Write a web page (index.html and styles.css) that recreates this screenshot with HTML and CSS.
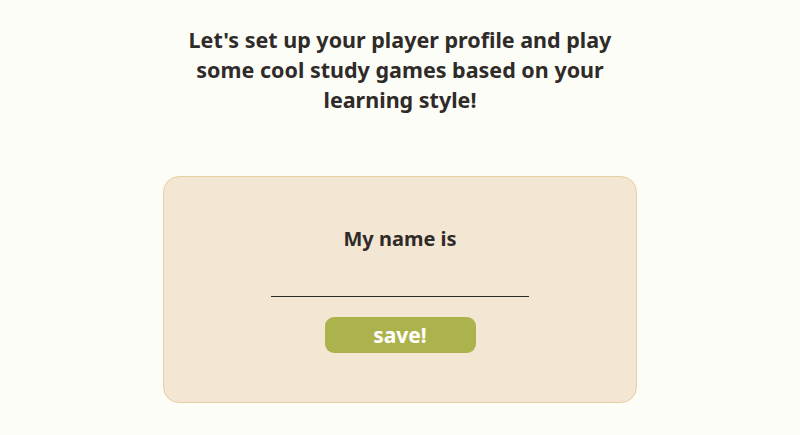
FILE: index.html
```html
<!DOCTYPE html>
<html>
<head>
<meta charset="utf-8">
<link rel="stylesheet" href="styles.css">
</head>
<body>
<main class="page">
  <h1 class="intro">Let's set up your player profile and play some cool study games based on your learning style!</h1>
  <section class="card">
    <h2 class="label">My name is</h2>
    <input class="name-input" type="text" aria-label="name">
    <button class="save">save!</button>
  </section>
</main>
</body>
</html>
```
FILE: styles.css
```css
html, body {
  margin: 0;
  padding: 0;
  background: #fdfdf8;
}
body {
  font-family: "Noto Sans", sans-serif;
  color: #2f2b29;
}
.page {
  display: flex;
  flex-direction: column;
  align-items: center;
  padding-top: 25px;
}
.intro {
  margin: 0;
  width: 440px;
  text-align: center;
  font-size: 21.5px;
  line-height: 30px;
  font-weight: 700;
}
.card {
  box-sizing: border-box;
  margin-top: 61px;
  width: 474px;
  height: 227px;
  background: #f3e6d3;
  border: 1.5px solid #e5d0a4;
  border-radius: 16px;
  display: flex;
  flex-direction: column;
  align-items: center;
  padding-top: 47px;
}
.label {
  margin: 0;
  font-size: 20px;
  line-height: 30px;
  font-weight: 700;
}
.name-input {
  margin-top: 15px;
  width: 258px;
  height: 28px;
  box-sizing: border-box;
  border: none;
  border-bottom: 1.5px solid #2f2b29;
  background: transparent;
  outline: none;
  font: inherit;
}
.save {
  margin-top: 20px;
  width: 151px;
  height: 36px;
  border: none;
  border-radius: 9px;
  background: #adb34c;
  color: #fff;
  font-family: "Noto Sans", sans-serif;
  font-size: 21px;
  font-weight: 700;
  padding: 0;
}
```
